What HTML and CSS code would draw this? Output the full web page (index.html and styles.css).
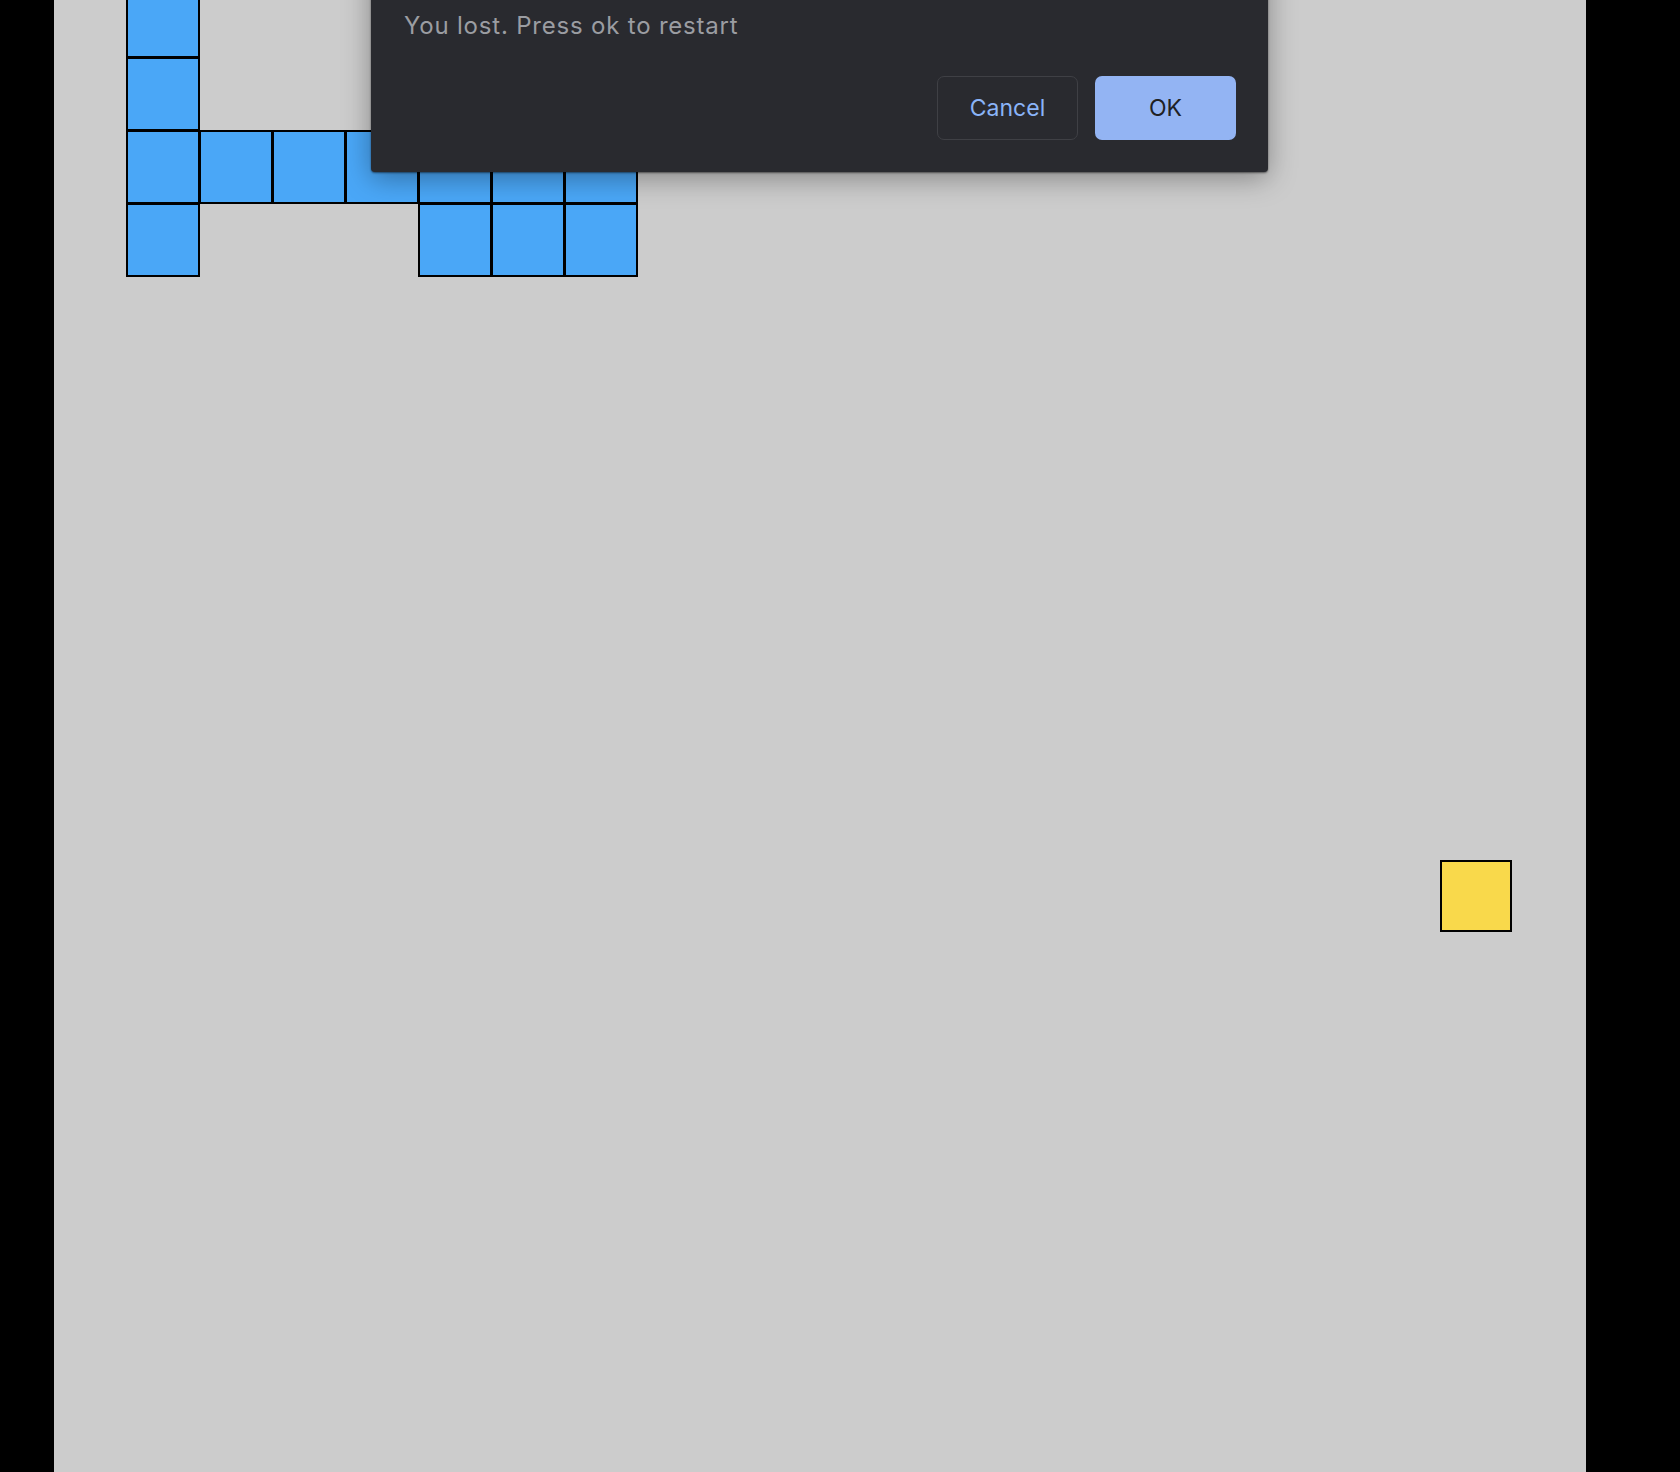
FILE: index.html
```html
<!DOCTYPE html>
<html lang="en">
<head>
<meta charset="utf-8">
<title>Tetris</title>
<link rel="stylesheet" href="styles.css">
</head>
<body>
<main class="field">
  <div class="board">
    <div class="cell blue" style="grid-area: 1 / 2"></div>
    <div class="cell blue" style="grid-area: 2 / 2"></div>
    <div class="cell blue" style="grid-area: 3 / 2"></div>
    <div class="cell blue" style="grid-area: 3 / 3"></div>
    <div class="cell blue" style="grid-area: 3 / 4"></div>
    <div class="cell blue" style="grid-area: 3 / 5"></div>
    <div class="cell blue" style="grid-area: 3 / 6"></div>
    <div class="cell blue" style="grid-area: 3 / 7"></div>
    <div class="cell blue" style="grid-area: 3 / 8"></div>
    <div class="cell blue" style="grid-area: 4 / 2"></div>
    <div class="cell blue" style="grid-area: 4 / 6"></div>
    <div class="cell blue" style="grid-area: 4 / 7"></div>
    <div class="cell blue" style="grid-area: 4 / 8"></div>
    <div class="cell yellow" style="grid-area: 13 / 20"></div>
  </div>
</main>
<div class="dialog" role="alertdialog">
  <p class="message">You lost. Press ok to restart</p>
  <div class="actions">
    <button class="btn btn-cancel">Cancel</button>
    <button class="btn btn-ok">OK</button>
  </div>
</div>
</body>
</html>
```

FILE: styles.css
```css
html, body {
  margin: 0;
  padding: 0;
  background: #000;
  height: 100%;
  overflow: hidden;
}

.field {
  margin-left: 54px;
  width: 1532px;
  height: 1472px;
  background: #cccccc;
  overflow: hidden;
}

.board {
  display: grid;
  grid-template-columns: 72px repeat(20, 73px);
  grid-template-rows: repeat(21, 73px);
  margin-top: -16px;
}

.cell {
  box-sizing: border-box;
  width: 74px;
  height: 74px;
  border: 2px solid #000;
}

.yellow {
  width: 72px;
  height: 72px;
}

.blue {
  background: #4aa7f7;
}

.yellow {
  background: #f9d94b;
}

.dialog {
  position: absolute;
  left: 371px;
  top: -40px;
  width: 897px;
  box-sizing: border-box;
  padding: 51px 32px 32px 33px;
  background: #292a2f;
  border-radius: 0 0 4px 4px;
  box-shadow: 0 6px 28px rgba(0, 0, 0, 0.35), 0 1px 2px rgba(0, 0, 0, 0.5);
  font-family: Inter, "Noto Sans", sans-serif;
}

.message {
  margin: 0;
  font-size: 24px;
  line-height: 30px;
  letter-spacing: 0.8px;
  color: #9b9da2;
}

.actions {
  display: flex;
  justify-content: flex-end;
  gap: 17px;
  margin-top: 35px;
}

.btn {
  box-sizing: border-box;
  width: 141px;
  height: 64px;
  border-radius: 7px;
  font-family: Inter, "Noto Sans", sans-serif;
  font-size: 23px;
  padding: 0;
  cursor: pointer;
}

.btn-cancel {
  background: transparent;
  border: 1px solid #3f4045;
  color: #8ab4f8;
}

.btn-ok {
  background: #93b4f3;
  border: none;
  color: #202124;
}
```
